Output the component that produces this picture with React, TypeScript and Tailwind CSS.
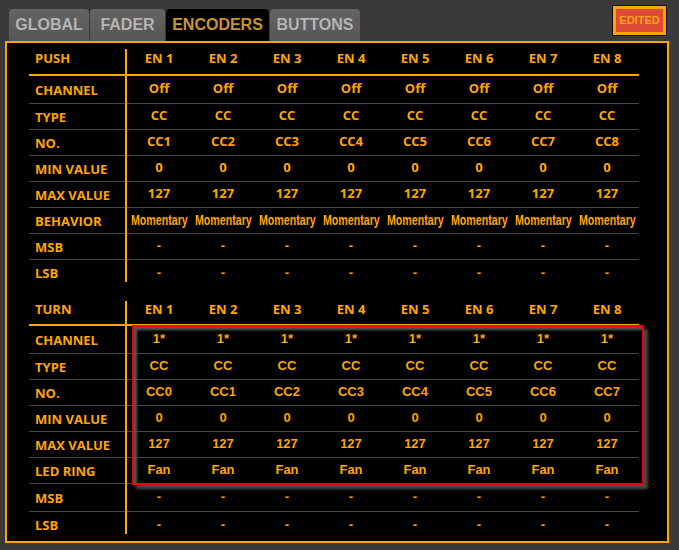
import React from "react";

// ---------------------------------------------------------------------------
// Data
// ---------------------------------------------------------------------------

const COLS = [1, 2, 3, 4, 5, 6, 7, 8];

type Row = { label: string; values: string[]; narrow?: boolean; arial?: boolean };

const pushRows: Row[] = [
  { label: "CHANNEL", values: COLS.map(() => "Off") },
  { label: "TYPE", values: COLS.map(() => "CC") },
  { label: "NO.", values: COLS.map((n) => `CC${n}`) },
  { label: "MIN VALUE", values: COLS.map(() => "0") },
  { label: "MAX VALUE", values: COLS.map(() => "127") },
  { label: "BEHAVIOR", values: COLS.map(() => "Momentary"), narrow: true },
  { label: "MSB", values: COLS.map(() => "-"), arial: true },
  { label: "LSB", values: COLS.map(() => "-"), arial: true },
];

const turnRows: Row[] = [
  { label: "CHANNEL", values: COLS.map(() => "1*"), arial: true },
  { label: "TYPE", values: COLS.map(() => "CC"), arial: true },
  { label: "NO.", values: COLS.map((n) => `CC${n - 1}`), arial: true },
  { label: "MIN VALUE", values: COLS.map(() => "0"), arial: true },
  { label: "MAX VALUE", values: COLS.map(() => "127"), arial: true },
  { label: "LED RING", values: COLS.map(() => "Fan"), arial: true },
  { label: "MSB", values: COLS.map(() => "-"), arial: true },
  { label: "LSB", values: COLS.map(() => "-"), arial: true },
];

// ---------------------------------------------------------------------------
// Table pieces
// ---------------------------------------------------------------------------

function HeaderRow({ title, height }: { title: string; height: string }) {
  return (
    <div className={`flex ${height}`}>
      <div className="w-[96px] border-b-2 border-[#ffa500] pl-[6px] flex items-center">
        {title}
      </div>
      <div className="w-[2px] pt-[6px] flex flex-col">
        <div className="flex-1 bg-[#ffa500]" />
      </div>
      {COLS.map((n) => (
        <div
          key={n}
          className="w-[64px] border-b-2 border-[#ffa500] flex items-center justify-center"
        >
          EN {n}
        </div>
      ))}
    </div>
  );
}

function DataRow({
  row,
  height,
  last,
}: {
  row: Row;
  height: string;
  last?: boolean;
}) {
  const line = last ? "" : "border-b border-[#464646]";
  const valueFont = row.narrow
    ? "font-['Liberation_Sans',Arial,sans-serif] text-[14px]"
    : row.arial
      ? "font-['Liberation_Sans',Arial,sans-serif] text-[13px]"
      : "";
  return (
    <div className={`flex ${height}`}>
      <div className={`w-[96px] ${line} pl-[6px] flex items-center pt-[1px]`}>
        {row.label}
      </div>
      <div className={`w-[2px] flex flex-col ${last ? "pb-[4px]" : ""}`}>
        <div className="flex-1 bg-[#ffa500]" />
      </div>
      {row.values.map((v, i) => (
        <div
          key={i}
          className={`w-[64px] ${line} flex items-center justify-center pb-[2px] whitespace-nowrap ${valueFont}`}
        >
          {row.narrow ? (
            // condensed label, squeezed to fit the 64px column
            <span className="inline-block scale-x-[0.76]">{v}</span>
          ) : (
            v
          )}
        </div>
      ))}
    </div>
  );
}

// ---------------------------------------------------------------------------
// App
// ---------------------------------------------------------------------------

const TABS = [
  { name: "GLOBAL", w: "w-[80px]" },
  { name: "FADER", w: "w-[75px]" },
  { name: "ENCODERS", w: "w-[103px]", active: true },
  { name: "BUTTONS", w: "w-[90px]" },
];

export default function App() {
  return (
    <div className="w-[679px] h-[550px] bg-[#3a3a3a] overflow-hidden font-['Open_Sans','Noto_Sans',sans-serif]">
      {/* Top bar: tabs + edited flag */}
      <div className="flex justify-between h-[41px] pl-[9px] pr-[12px]">
        <div className="flex gap-[1px] pt-[9px]">
          {TABS.map((t) => (
            <div
              key={t.name}
              className={`${t.w} h-[32px] rounded-t-[4px] flex items-center justify-center font-['Liberation_Sans',Arial,sans-serif] font-bold text-[16px] ${
                t.active
                  ? "bg-black text-[#c8962a]"
                  : "bg-gradient-to-b from-[#646464] to-[#565656] text-[#b4b4b4]"
              }`}
            >
              {t.name}
            </div>
          ))}
        </div>
        <div className="mt-[5px] h-[31px] w-[55px] border border-[#111] bg-[#ffa500] p-[3px]">
          <div className="h-full w-full bg-[#de4a33] flex items-center justify-center font-['Liberation_Sans',Arial,sans-serif] font-bold text-[11px] text-[#ffa21f]">
            EDITED
          </div>
        </div>
      </div>

      {/* Panel */}
      <div className="mx-[5px] w-[664px] h-[502px] border-2 border-[#ffa500] bg-black pl-[22px] text-[13px] font-bold text-[#ffa500] leading-none">
        {/* PUSH */}
        <div>
          <HeaderRow title="PUSH" height="h-[33px]" />
          {pushRows.map((r, i) => (
            <DataRow
              key={r.label}
              row={r}
              height={i === 0 ? "h-[28px]" : "h-[26px]"}
              last={i === pushRows.length - 1}
            />
          ))}
        </div>

        {/* TURN */}
        <div className="relative mt-[9px]">
          <HeaderRow title="TURN" height="h-[31px]" />
          {turnRows.map((r, i) => (
            <DataRow
              key={r.label}
              row={r}
              height={i === 0 || i === 6 ? "h-[28px]" : "h-[26px]"}
              last={i === turnRows.length - 1}
            />
          ))}
          {/* highlight box over the edited rows */}
          <div className="absolute left-[103px] top-[30px] w-[512px] h-[160px] border-2 border-[#f00000] shadow-[inset_3px_3px_3px_#5a5a5a,4px_4px_3px_#4a4a4a] pointer-events-none" />
        </div>
      </div>
    </div>
  );
}
